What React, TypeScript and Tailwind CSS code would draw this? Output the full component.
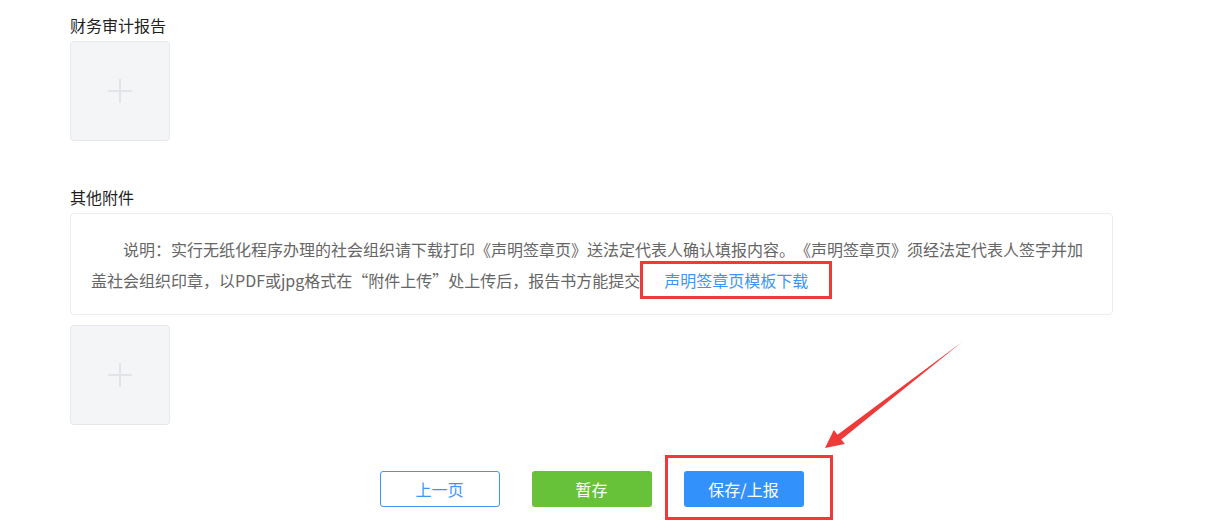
import React from "react";

function UploadBox() {
  return (
    <div className="flex h-[100px] w-[100px] items-center justify-center rounded-[4px] border border-[#e6e8ec] bg-[#f4f5f7]">
      <svg width="26" height="26" viewBox="0 0 26 26">
        <path d="M13 1v24M1 13h24" stroke="#e2e4e8" strokeWidth="2" fill="none" />
      </svg>
    </div>
  );
}

export default function App() {
  return (
    <main className="relative min-h-screen bg-white font-['Noto_Sans_CJK_SC',sans-serif] text-[16px] [text-spacing-trim:space-all]">
      <section className="w-[1043px] ml-[70px] pt-[14px] pb-[23px]">
        {/* 财务审计报告 */}
        <p className="leading-[22px] text-[#1f1f1f]">财务审计报告</p>
        <div className="mt-[5px]">
          <UploadBox />
        </div>

        {/* 其他附件 */}
        <p className="mt-[45px] leading-[22px] text-[#1f1f1f]">其他附件</p>
        <div className="mt-[5px] rounded-[4px] border border-[#ebedf0] bg-white pl-[20px] pr-[20px] pt-[20px] pb-[18px]">
          <p className="indent-[32px] leading-[31px] text-[#666]">
            说明：实行无纸化程序办理的社会组织请下载打印《声明签章页》送法定代表人确认填报内容。《声明签章页》须经法定代表人签字并加盖社会组织印章，以PDF或jpg格式在“附件上传”处上传后，报告书方能提交
            <span className="relative inline-block indent-0 px-[24px] text-[#3d95fb] cursor-pointer">
              声明签章页模板下载
              <span className="absolute -top-[4px] -bottom-[3px] left-0 right-0 border-[3px] border-[#ef3a3a]" />
            </span>
          </p>
        </div>
        <div className="mt-[10px]">
          <UploadBox />
        </div>

        {/* Buttons */}
        <div className="mt-[46px] flex justify-center gap-[32px]">
          <button className="h-[36px] w-[120px] rounded-[3px] border border-[#3d95fb] bg-white text-[#3d95fb]">
            上一页
          </button>
          <button className="h-[36px] w-[120px] rounded-[3px] bg-[#67c23a] text-white">
            暂存
          </button>
          <div className="relative">
            <button className="h-[36px] w-[120px] rounded-[3px] bg-[#3391fb] text-white">
              保存/上报
            </button>
            <span className="absolute -top-[16px] -bottom-[13px] -left-[19px] -right-[29px] border-[3px] border-[#ef3a3a]" />
          </div>
        </div>
      </section>

      {/* annotation arrow */}
      <svg
        className="absolute left-[820px] top-[335px]"
        width="150"
        height="120"
        viewBox="0 0 150 120"
      >
        <polygon
          points="5,113 13.8,94.9 17.5,99.8 142,7 21.3,104.6 24.8,109.1"
          fill="#ef3a3a"
        />
      </svg>
    </main>
  );
}
